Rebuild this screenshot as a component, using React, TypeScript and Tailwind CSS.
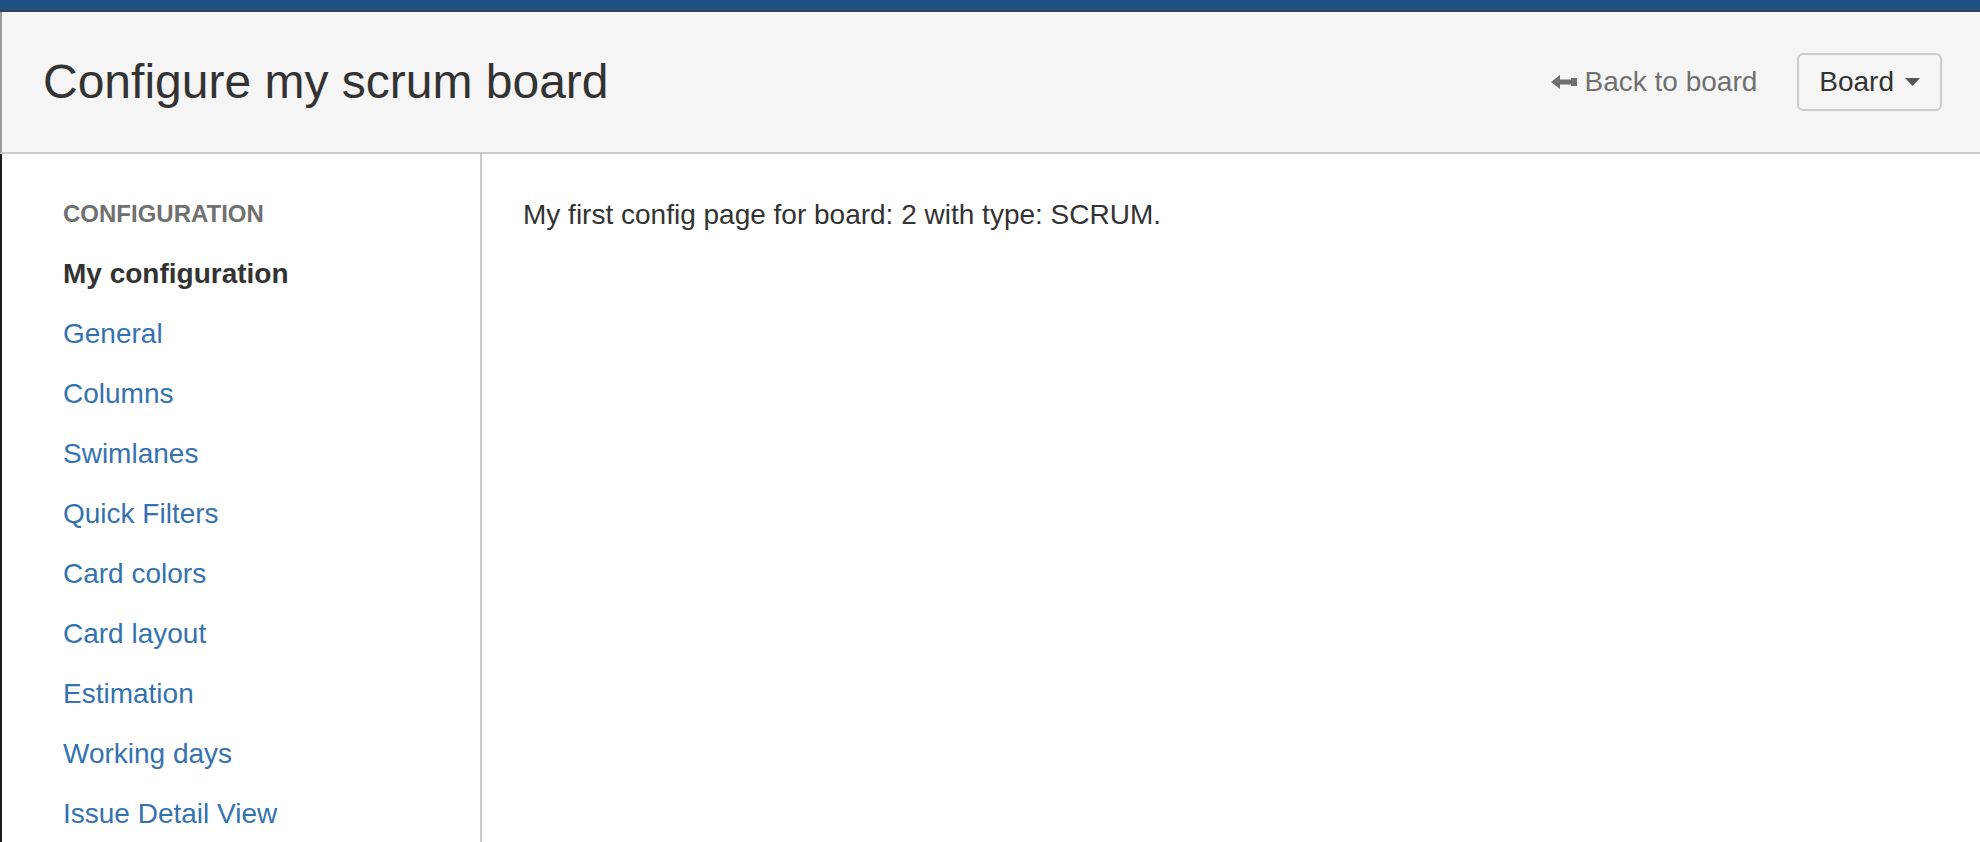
import React from 'react';

const navItems = [
  'General',
  'Columns',
  'Swimlanes',
  'Quick Filters',
  'Card colors',
  'Card layout',
  'Estimation',
  'Working days',
  'Issue Detail View',
];

const BackArrow: React.FC = () => (
  <svg width="26" height="14" viewBox="0 0 26 14" className="mr-[8px]" fill="#707070">
    <polygon points="0,7 9,0 9,14" />
    <rect x="8" y="4.5" width="15" height="5" />
    <rect x="20" y="3" width="6" height="8" />
  </svg>
);

const App: React.FC = () => {
  return (
    <div className="min-h-screen bg-white font-['Liberation_Sans',Arial,sans-serif] text-[#333]">
      {/* top app bar */}
      <div className="h-[10px] bg-[#205081]" />
      <div className="h-[2px] bg-[#2c4363]" />

      {/* page header */}
      <div className="flex items-center justify-between h-[142px] bg-[#f5f5f5] border-b-2 border-[#cccccc] border-l-2 border-l-[#9a9a9a] pl-[41px] pr-[38px]">
        <h1 className="text-[48px] leading-[56px] text-[#333] font-normal">Configure my scrum board</h1>
        <div className="flex items-center">
          <a className="flex items-center text-[28px] leading-[40px] text-[#707070] mr-[40px]">
            <BackArrow />
            Back to board
          </a>
          <button className="flex items-center h-[58px] pl-[20px] pr-[20px] border-2 border-[#cccccc] rounded-[6px] bg-[#f5f5f5] text-[28px] text-[#333]">
            Board
            <svg width="15" height="8" viewBox="0 0 15 8" className="ml-[11px]">
              <polygon points="0,0 15,0 7.5,8" fill="#555" />
            </svg>
          </button>
        </div>
      </div>

      {/* body */}
      <div className="flex">
        <div className="w-[482px] min-h-[688px] border-r-2 border-[#cccccc] border-l-2 border-l-[#1a1a1a] pl-[61px] pt-[30px]">
          <div className="h-[60px] leading-[60px] text-[24px] font-bold uppercase text-[#707070]">Configuration</div>
          <div className="h-[60px] leading-[60px] text-[28px] font-bold text-[#333]">My configuration</div>
          {navItems.map(item => (
            <div key={item} className="h-[60px] leading-[60px] text-[28px]">
              <a className="text-[#3572b0]">{item}</a>
            </div>
          ))}
        </div>
        <div className="flex-1 pl-[41px] pt-[41px]">
          <p className="text-[28px] leading-[40px] text-[#333]">My first config page for board: 2 with type: SCRUM.</p>
        </div>
      </div>
    </div>
  );
};

export default App;
